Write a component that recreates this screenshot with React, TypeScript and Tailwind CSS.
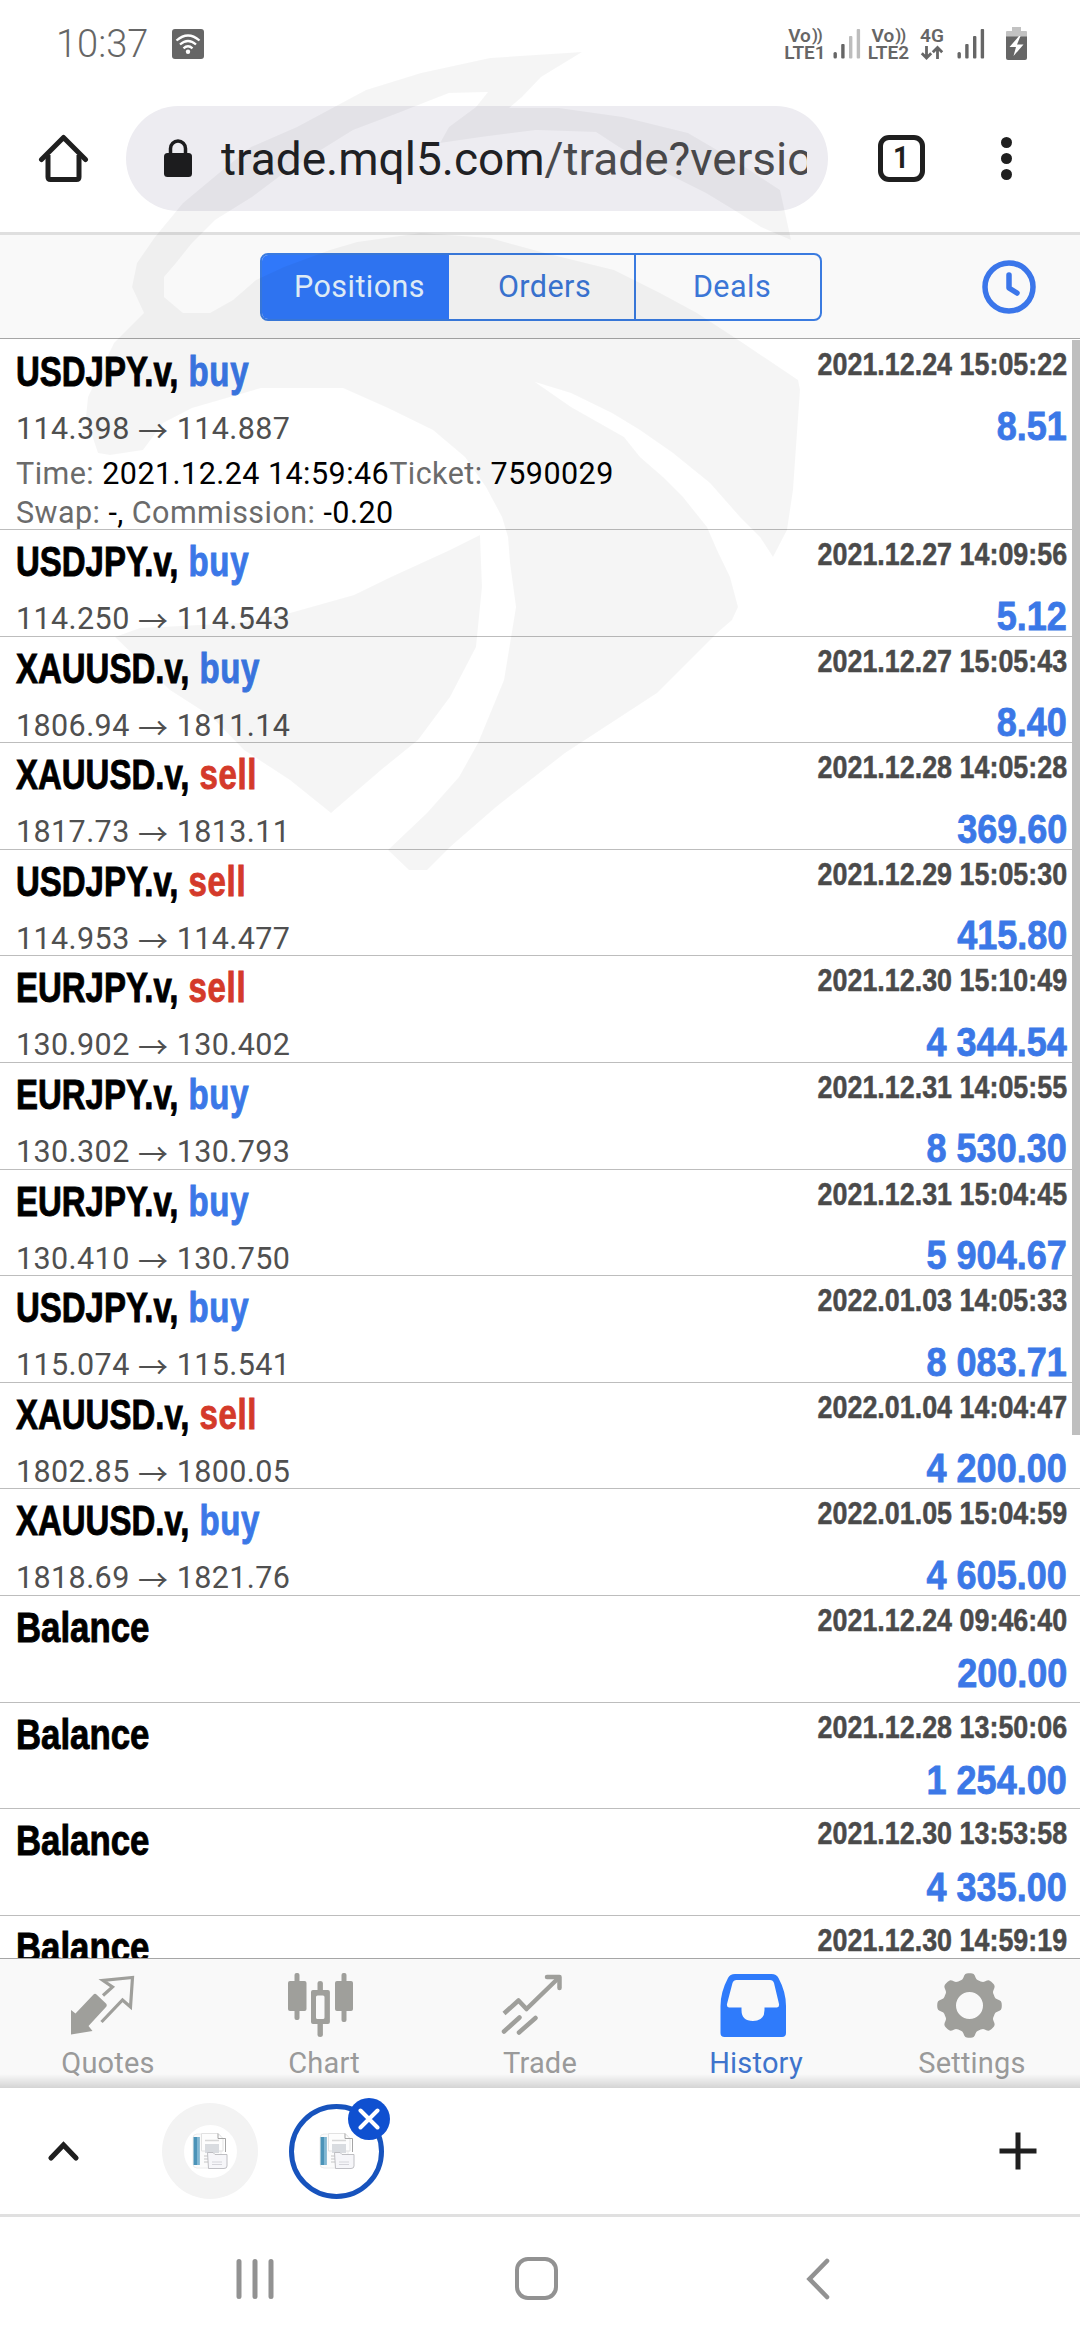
import type { ReactNode } from "react";

type Side = "buy" | "sell";

interface Deal {
  symbol: string;
  side?: Side;
  open?: string;
  close?: string;
  date: string;
  amount: string;
  details?: boolean;
}

const deals: Deal[] = [
  { symbol: "USDJPY.v", side: "buy", open: "114.398", close: "114.887", date: "2021.12.24 15:05:22", amount: "8.51", details: true },
  { symbol: "USDJPY.v", side: "buy", open: "114.250", close: "114.543", date: "2021.12.27 14:09:56", amount: "5.12" },
  { symbol: "XAUUSD.v", side: "buy", open: "1806.94", close: "1811.14", date: "2021.12.27 15:05:43", amount: "8.40" },
  { symbol: "XAUUSD.v", side: "sell", open: "1817.73", close: "1813.11", date: "2021.12.28 14:05:28", amount: "369.60" },
  { symbol: "USDJPY.v", side: "sell", open: "114.953", close: "114.477", date: "2021.12.29 15:05:30", amount: "415.80" },
  { symbol: "EURJPY.v", side: "sell", open: "130.902", close: "130.402", date: "2021.12.30 15:10:49", amount: "4 344.54" },
  { symbol: "EURJPY.v", side: "buy", open: "130.302", close: "130.793", date: "2021.12.31 14:05:55", amount: "8 530.30" },
  { symbol: "EURJPY.v", side: "buy", open: "130.410", close: "130.750", date: "2021.12.31 15:04:45", amount: "5 904.67" },
  { symbol: "USDJPY.v", side: "buy", open: "115.074", close: "115.541", date: "2022.01.03 14:05:33", amount: "8 083.71" },
  { symbol: "XAUUSD.v", side: "sell", open: "1802.85", close: "1800.05", date: "2022.01.04 14:04:47", amount: "4 200.00" },
  { symbol: "XAUUSD.v", side: "buy", open: "1818.69", close: "1821.76", date: "2022.01.05 15:04:59", amount: "4 605.00" },
  { symbol: "Balance", date: "2021.12.24 09:46:40", amount: "200.00" },
  { symbol: "Balance", date: "2021.12.28 13:50:06", amount: "1 254.00" },
  { symbol: "Balance", date: "2021.12.30 13:53:58", amount: "4 335.00" },
  { symbol: "Balance", date: "2021.12.30 14:59:19", amount: "" },
];

function SignalBars({ weak }: { weak?: boolean }) {
  const off = weak ? "#bdbdbd" : "#666";
  return (
    <svg width="28" height="32" viewBox="0 0 28 32">
      <rect x="0.5" y="24" width="3.4" height="6.5" rx="1.5" fill="#666" />
      <rect x="8.2" y="16" width="3.4" height="14.5" rx="1" fill="#666" />
      <rect x="16" y="8" width="3.4" height="22.5" rx="1" fill={off} />
      <rect x="23.7" y="1" width="3.4" height="29.5" rx="1" fill={off} />
    </svg>
  );
}

function VoLte({ n }: { n: number }) {
  return (
    <div className="flex flex-col items-center text-[19px] leading-[17.5px] font-semibold">
      <span className="flex">
        Vo<span className="ml-px text-[17px] tracking-[-1px]">))</span>
      </span>
      <span>LTE{n}</span>
    </div>
  );
}

function StatusBar() {
  return (
    <div className="flex h-[85px] items-center pt-[3px] pl-[56px] text-[#666]">
      <span className="w-[98px] text-[38px] leading-[44px] font-light">10:37</span>
      <svg className="ml-[18px]" width="32" height="30" viewBox="0 0 32 30">
        <rect width="32" height="30" rx="3" fill="#666" />
        <g fill="none" stroke="#fff" strokeWidth="2.3">
          <path d="M4.5 11.5Q16 1.5 27.5 11.5" />
          <path d="M8 15.5Q16 8.5 24 15.5" />
          <path d="M11.5 19.3Q16 15.3 20.5 19.3" />
        </g>
        <circle cx="16" cy="22.8" r="2.2" fill="#fff" />
      </svg>
      <div className="ml-auto flex items-center pr-[52px]">
        <VoLte n={1} />
        <div className="ml-[7px]">
          <SignalBars weak />
        </div>
        <div className="ml-[7px]">
          <VoLte n={2} />
        </div>
        <div className="ml-[11px] flex flex-col items-center">
          <span className="text-[19px] leading-[17.5px] font-semibold">4G</span>
          <svg width="24" height="16" viewBox="0 0 24 16" fill="none" stroke="#666" strokeWidth="2.8">
            <path d="M6.5 1V12.5M1.8 8.2L6.5 13L11.2 8.2" />
            <path d="M17.5 14V3M12.8 7.2L17.5 2.4L22.2 7.2" />
          </svg>
        </div>
        <div className="ml-[13px]">
          <SignalBars />
        </div>
        <svg className="ml-[20px]" width="23" height="34" viewBox="0 0 23 34">
          <path d="M7 0h9v4h5a1 1 0 0 1 1 1v5H1V5a1 1 0 0 1 1-1h5z" fill="#c2c2c2" />
          <path d="M1 9.500h21V31a2 2 0 0 1-2 2H3a2 2 0 0 1-2-2z" fill="#666" />
          <path d="M14 9L4.500 20H11L8.500 29L18.500 17.500H12L15.500 9z" fill="#fff" />
        </svg>
      </div>
    </div>
  );
}

function AddressBar() {
  return (
    <div className="flex h-[147px] items-center">
      <svg className="ml-[38px]" width="51" height="51" viewBox="0 0 51 51" fill="none" stroke="#1f1f1f" strokeWidth="5" strokeLinejoin="round">
        <path d="M3.500 26.500L25.500 4.500L47.500 26.500" strokeLinecap="round" />
        <path d="M10 22V44Q10 46.500 12.500 46.500H38.500Q41 46.500 41 44V22" />
      </svg>
      <div className="ml-[37px] flex h-[105px] w-[702px] items-center rounded-full bg-[#edecf1] pl-[37px]">
        <svg width="30" height="39" viewBox="0 0 30 39">
          <rect x="1" y="14" width="28" height="24" rx="3.500" fill="#1c1c1e" />
          <path d="M7.500 15V9.500a7.500 7.500 0 0 1 15 0V15" fill="none" stroke="#1c1c1e" strokeWidth="3.500" />
        </svg>
        <div className="ml-[28px] w-[586px] overflow-hidden text-[46px] leading-[56px] whitespace-nowrap text-[#4a4a4d]">
          <span className="text-[#202124]">trade.mql5.com</span>/trade?version
        </div>
      </div>
      <div className="ml-[50px] flex size-[47px] items-center justify-center rounded-[11px] border-[5px] border-[#1f1f1f] text-[31px] font-bold text-[#1f1f1f]">
        <span className="-translate-x-px scale-x-90">1</span>
      </div>
      <div className="ml-[76px] flex flex-col gap-[5px]">
        <span className="size-[11px] rounded-full bg-[#1f1f1f]" />
        <span className="size-[11px] rounded-full bg-[#1f1f1f]" />
        <span className="size-[11px] rounded-full bg-[#1f1f1f]" />
      </div>
    </div>
  );
}

function Toolbar() {
  return (
    <div className="flex h-[107px] items-start border-t-[3px] border-b border-t-[#dfdfdf] border-b-[#a6a6a6] bg-[#f9f9f9]">
      <div className="mt-[18px] ml-[260px] flex h-[68px] w-[562px] overflow-hidden rounded-[8px] border-2 border-[#3a7be0] text-[30.5px] tracking-[0.45px] text-[#3b76d6]">
        <div className="flex w-[187px] items-center justify-center bg-[#3078fa] pl-[8px] text-[#e6f5ff]">Positions</div>
        <div className="flex w-[187px] items-center justify-center border-r-2 border-[#3a7be0] pl-[6px]">Orders</div>
        <div className="flex flex-1 items-center justify-center pl-[8px]">Deals</div>
      </div>
      <svg className="mt-[23px] mr-[42px] ml-auto" width="58" height="58" viewBox="0 0 58 58" fill="none" stroke="#3b76ea" strokeWidth="5.500" strokeLinecap="round" strokeLinejoin="round">
        <circle cx="29" cy="29" r="24" />
        <path d="M29 17V30L37 35" />
      </svg>
    </div>
  );
}

function DealRow({ deal }: { deal: Deal }) {
  const title = deal.side
    ? "origin-left scale-x-[0.785]"
    : "origin-left scale-x-[0.828]";
  return (
    <div className={`flex shrink-0 justify-between border-b border-[#bdbdbd] pr-[13px] pl-[16px] ${deal.details ? "h-[190px]" : "h-[106.6px]"}`}>
      <div className="flex flex-col">
        <div className={`mt-[8px] w-[340px] text-[42px] leading-[48px] font-bold whitespace-nowrap text-black [font-family:'Liberation_Sans',Arial,sans-serif] [-webkit-text-stroke:0.9px] ${title}`}>
          {deal.symbol}
          {deal.side && (
            <>
              , <span className={`ml-px tracking-[0.9px] ${deal.side === "buy" ? "text-[#3b78e7]" : "text-[#d43a2a]"}`}>{deal.side}</span>
            </>
          )}
        </div>
        {deal.open && (
          <div className="mt-[15px] flex text-[30.5px] leading-[36px] tracking-[0.4px] text-[#505050]">
            {deal.open}
            <span className="w-[47px] text-center text-[30px] [font-family:'Noto_Sans_CJK_SC',sans-serif]">→</span>
            {deal.close}
          </div>
        )}
        {deal.details && (
          <div className="mt-[8px] text-[30.5px] leading-[38.7px] tracking-[0.45px] whitespace-nowrap text-black">
            <div>
              <Muted>Time: </Muted>2021.12.24 14:59:46<Muted>Ticket: </Muted>7590029
            </div>
            <div>
              <Muted>Swap: </Muted>-, <Muted>Commission: </Muted>-0.20
            </div>
          </div>
        )}
      </div>
      <div className="flex flex-col items-end font-bold whitespace-nowrap [font-family:'Liberation_Sans',Arial,sans-serif] [-webkit-text-stroke:0.5px]">
        <div className="mt-[6px] origin-right scale-x-[0.84] text-[32px] leading-[36px] text-[#4a4a4a]">{deal.date}</div>
        <div className={`origin-right scale-x-[0.9] text-[40px] leading-[38px] text-[#3b78e7] [-webkit-text-stroke:0.8px] ${deal.side ? "mt-[24.500px]" : "mt-[16.500px]"}`}>{deal.amount}</div>
      </div>
    </div>
  );
}

function Muted({ children }: { children: ReactNode }) {
  return <span className="text-[#6b6b6b]">{children}</span>;
}

const gearPath =
  Array.from({ length: 144 }, (_, i) => {
    const t = (i / 144) * Math.PI * 2;
    const r = 29.4 + 3 * Math.tanh(2 * Math.cos(8 * t));
    return `${i ? "L" : "M"}${(37.5 + r * Math.cos(t)).toFixed(2)} ${(33.5 + r * Math.sin(t)).toFixed(2)}`;
  }).join("") + "ZM51 33.5a13.5 13.5 0 1 0-27 0a13.5 13.5 0 1 0 27 0Z";

function NavItem({ label, active, children }: { label: string; active?: boolean; children: ReactNode }) {
  return (
    <div className="flex flex-1 flex-col items-center pt-[13px]">
      <svg width="80" height="66" viewBox="0 0 80 66">
        {children}
      </svg>
      <span className={`mt-[8px] text-[29px] leading-[34px] tracking-[0.2px] ${active ? "text-[#3f74cc]" : "text-[#9a9a9a]"}`}>{label}</span>
    </div>
  );
}

function BottomNav() {
  return (
    <div className="relative flex h-[130px] border-t border-[#a6a6a6] bg-[#f9f9f9]">
      <NavItem label="Quotes">
        <g transform="translate(-68 -1972)">
          <path d="M71 2010L75.500 2013.500L93.500 1994.500Q95 1993 96.500 1994.500L106 2003.500Q107.500 2005 106 2007L88.500 2026L92.500 2031L71 2034.500Z" fill="#9f9f9b" />
          <path d="M103 1995.500L112.500 1987L103 1980.500L132.500 1977.500L130.500 2007L122.500 2000L101.500 2022" fill="none" stroke="#9f9f9b" strokeWidth="3.200" />
        </g>
      </NavItem>
      <NavItem label="Chart">
        <g transform="translate(-284 -1972)" fill="#9f9f9b">
          <rect x="288" y="1981" width="18.500" height="30" rx="2" />
          <rect x="294.500" y="1973" width="5" height="47" rx="2" />
          <rect x="335" y="1981" width="18" height="30" rx="2" />
          <rect x="341.500" y="1973" width="5" height="49" rx="2" />
          <path d="M313 1990h4.500v-7q0-2 2.700-2t2.700 2v7h5q2 0 2 2v30q0 2-2 2h-5v11q0 2-2.700 2t-2.700-2v-11H313q-2 0-2-2v-30q0-2 2-2zM317.500 1995.500q-1.500 0-1.500 1.500v20.500q0 1.500 1.500 1.500h5.500q1.500 0 1.500-1.500V1997q0-1.500-1.500-1.500z" fillRule="evenodd" />
        </g>
      </NavItem>
      <NavItem label="Trade">
        <g transform="translate(-500 -1972)" fill="none" stroke="#9f9f9b" strokeWidth="4.500" strokeLinejoin="round">
          <path d="M504 2013.500L518.500 2000.500L526.500 2009L558.500 1978" />
          <path d="M547 1977H559.500V1988" strokeLinecap="round" />
          <path d="M504 2031.500L519.500 2017.500M519 2032.500L535.500 2018" strokeLinecap="round" />
        </g>
      </NavItem>
      <NavItem label="History" active>
        <g transform="translate(-716 -1972)">
          <path d="M735 1974H771.500Q776.500 1974 778.500 1978Q786 1992 786 2006V2033Q786 2037 782 2037H724.500Q720.500 2037 720.500 2033V2006Q720.500 1992 728 1978Q730 1974 735 1974ZM736.500 1980Q733.500 1980 732.500 1983L727 2004Q726.500 2007.500 729 2007.500H741.500V2010Q741.500 2021 753 2021T764.500 2010V2007.500H777Q779.500 2007.500 779 2004L774 1983Q773 1980 770 1980Z" fill="#2f7bfb" fillRule="evenodd" />
        </g>
      </NavItem>
      <NavItem label="Settings">
        <path d={gearPath} fill="#9f9f9b" fillRule="evenodd" />
      </NavItem>
      <div className="absolute inset-x-0 bottom-0 h-[14px] bg-linear-to-b from-transparent to-black/15" />
    </div>
  );
}

function PageIcon() {
  return (
    <svg width="38" height="38" viewBox="0 0 38 38">
      <rect x="2" y="2" width="28" height="34" rx="4" fill="#fbfbfb" stroke="#ececec" />
      <rect x="2.500" y="5" width="6" height="28" fill="#4b93b8" />
      <rect x="6" y="5" width="2.500" height="28" fill="#7fb6d2" />
      <path d="M10.500 1.500H27L32 6.500V19H10.500Z" fill="#fdfdfd" stroke="#e2e2e2" />
      <path d="M27 1.500V6.500H34.500V20" fill="none" stroke="#9b9b9b" strokeWidth="0.900" />
      <rect x="14" y="12" width="14" height="9" fill="#d9dce0" />
      <path d="M14 8.500H28M13 24H20M13 27H20M13 30H18" stroke="#d8d8d8" strokeWidth="1.300" />
      <path d="M16.500 20.500H22L24 22.500H36V34Q36 36.500 33 36.500H17.500Z" fill="#f6f6f9" stroke="#b9b9bd" strokeWidth="0.900" />
      <path d="M21 30H31M21 32.500H31" stroke="#d5d5db" strokeWidth="1.200" />
    </svg>
  );
}

function TabStrip() {
  return (
    <div className="flex h-[129px] items-center border-b-[3px] border-[#e0e0e0] bg-white">
      <svg className="ml-[47px]" width="34" height="24" viewBox="0 0 34 24" fill="none" stroke="#1f1f1f" strokeWidth="5.200" strokeLinecap="round">
        <path d="M4 19L16.500 6L29 19" strokeLinejoin="miter" />
      </svg>
      <div className="ml-[81px] flex size-[96px] items-center justify-center rounded-full bg-[#f3f3f3]">
        <div className="flex size-[53px] items-center justify-center rounded-full bg-white">
          <PageIcon />
        </div>
      </div>
      <div className="relative ml-[31px] flex size-[95px] items-center justify-center rounded-full border-[5px] border-[#1753bd]">
        <PageIcon />
        <div className="absolute -top-[11px] -right-[11px] flex size-[42px] items-center justify-center rounded-full bg-[#0f50d0]">
          <svg width="22" height="22" viewBox="0 0 22 22" stroke="#fff" strokeWidth="4" strokeLinecap="round">
            <path d="M2.500 2.500L19.500 19.500M19.500 2.500L2.500 19.500" />
          </svg>
        </div>
      </div>
      <svg className="mr-[43px] ml-auto" width="38" height="38" viewBox="0 0 38 38" stroke="#1f1f1f" strokeWidth="5">
        <path d="M19 0.500V37.500M0.500 19H37.500" />
      </svg>
    </div>
  );
}

function SystemNav() {
  return (
    <div className="flex h-[123px] items-center bg-white">
      <svg className="ml-[235px]" width="40" height="42" viewBox="0 0 40 42" stroke="#929292" strokeWidth="5" strokeLinecap="round">
        <path d="M4 3.500V38.500M20 3.500V38.500M36 3.500V38.500" />
      </svg>
      <div className="ml-[240px] size-[43px] rounded-[13px] border-[4.500px] border-[#929292]" />
      <svg className="ml-[247px]" width="28" height="42" viewBox="0 0 28 42" fill="none" stroke="#929292" strokeWidth="4.600" strokeLinecap="round">
        <path d="M22 3L4.500 21L22 39" />
      </svg>
    </div>
  );
}

function EagleWatermark() {
  return (
    <svg className="pointer-events-none absolute top-0 left-0" width="1080" height="900" viewBox="0 0 1080 900" fill="#000" fillOpacity="0.039">
      <path d="M582 52L541 77L522 97L509 108L559 108L623 117L688 133L734 160L780 190L786 217L791 240L761 227L734 210L706 193L660 170L619 147L596 132L536 130L481 137L440 143L449 127L476 107L488 92L449 93L431 100L398 113L353 130L316 153L284 173L252 197L215 220L192 243L176 263L164 277L164 297L183 313L210 313L233 300L256 280L284 267L330 250L357 242L421 233L490 238L545 253L614 270L660 293L697 313L743 343L798 380L800 390L793 490L787 530L773 557L760 537L740 517L710 483L673 453L640 430L612 413L571 393L535 382L571 407L624 437L640 457L663 477L683 497L707 527L717 550L730 577L738 607L732 620L717 633L687 663L657 693L565 753L496 807L450 847L427 870L409 870L388 850L427 813L459 777L478 743L504 680L516 607L510 563L508 537L502 517L486 487L465 457L433 430L388 408L343 388L261 388L192 408L163 423L143 450L110 455L98 453L86 417L88 397L114 343L144 313L132 287L137 263L155 237L183 203L219 173L251 147L297 127L366 90L421 73L490 58Z" />
      <path d="M480 535L450 550L391 577L354 595L290 613L239 623L140 628L115 637L170 690L212 717L244 750L290 780L331 813L381 770L418 740L450 697L476 647L482 587Z" />
    </svg>
  );
}

export default function App() {
  return (
    <div className="relative flex h-[2340px] w-[1080px] flex-col overflow-hidden bg-white [font-family:Roboto,sans-serif]">
      <StatusBar />
      <AddressBar />
      <Toolbar />
      <div className="flex h-[1619px] overflow-hidden pt-px">
        <div className="flex w-[1080px] shrink-0 flex-col">
          {deals.map((deal) => (
            <DealRow key={deal.date} deal={deal} />
          ))}
        </div>
        <div className="-ml-[8px] h-[1095px] w-[8px] shrink-0 bg-[#bfbfbf]" />
      </div>
      <BottomNav />
      <TabStrip />
      <SystemNav />
      <EagleWatermark />
    </div>
  );
}
